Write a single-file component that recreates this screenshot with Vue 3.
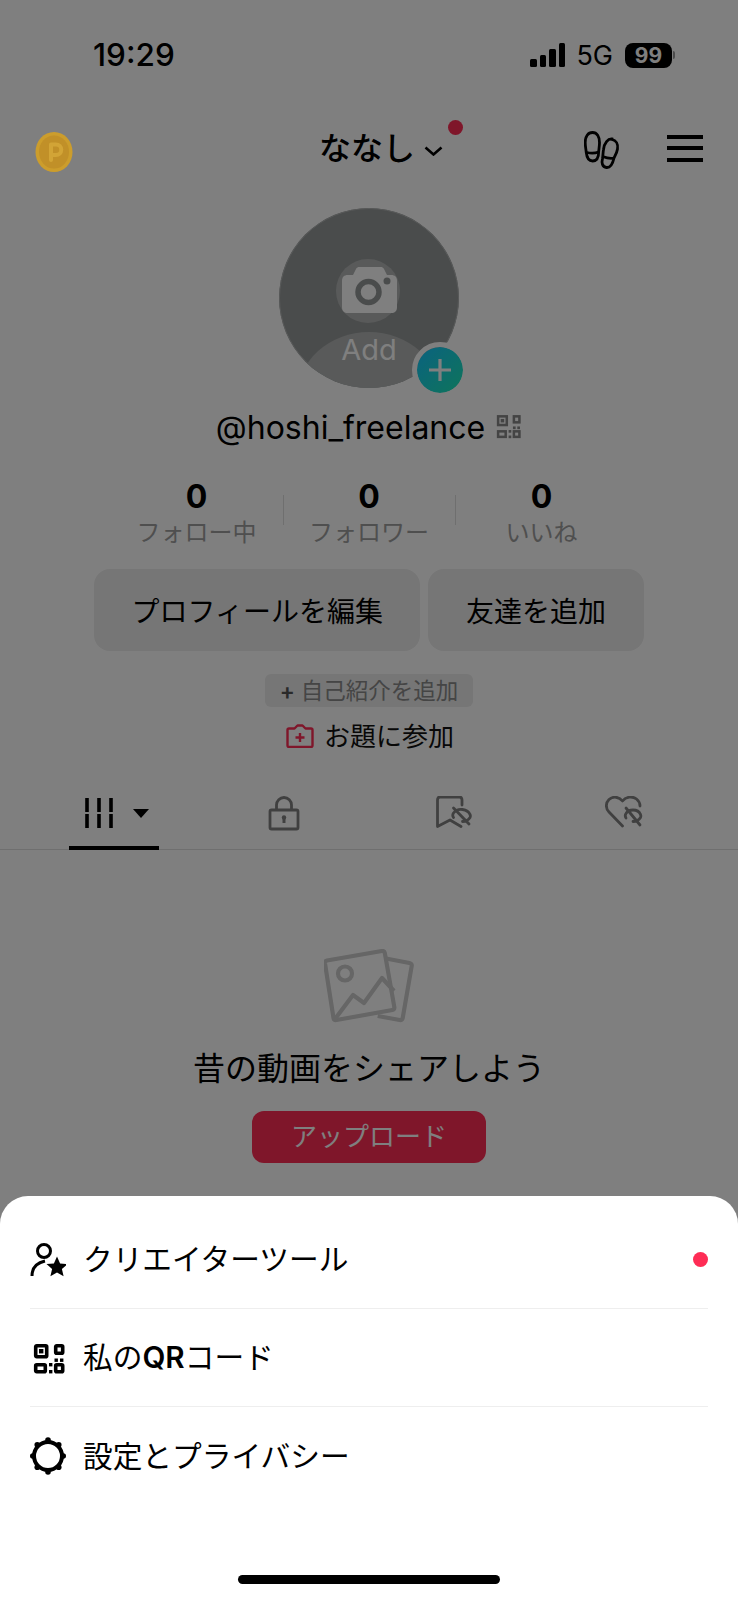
<template>
  <div class="page">
    <div class="status">
      <span class="time">19:29</span>
      <div class="status-right">
        <div class="signal"><i></i><i></i><i></i><i></i></div>
        <span class="net">5G</span>
        <div class="battery"><span>99</span></div>
        <div class="battery-cap"></div>
      </div>
    </div>

    <header class="top">
      <svg class="coin" width="38" height="40" viewBox="0 0 38 40">
        <ellipse cx="19" cy="20" rx="18.500" ry="20" fill="#cc9d2c" />
        <ellipse cx="19" cy="20" rx="15" ry="16.500" fill="#c19028" />
        <path d="M16 28V12.500h5a5 5 0 0 1 0 10.500H16" fill="none" stroke="#d2a436" stroke-width="4" stroke-linecap="round" stroke-linejoin="round" />
      </svg>
      <div class="title">
        <span>ななし</span>
        <svg width="19" height="10" viewBox="0 0 19 10">
          <path d="M1.500 1.500 9.500 8.500 17.500 1.500" fill="none" stroke="#000" stroke-width="2.600" />
        </svg>
        <i class="title-dot"></i>
      </div>
      <div class="top-icons">
        <svg class="feet" width="36" height="39" viewBox="0 0 36 39" fill="none" stroke="#000" stroke-width="2.800">
          <path d="M8.500 1.500c4.500 0 7 4 7 10 0 3-.500 6-.800 9 0 5-1.500 9.500-6 9.500s-6-4-6.500-9c-.300-3-1-6-1-9.500 0-6 2.800-10 7.300-10z" />
          <path d="M2.800 21.500c4 1 8 1 11.900-.500" />
          <path d="M28 8.500c4 .800 6.300 4.500 5.500 9.500-.500 3.500-2 6-3.500 9-1 4.500-2.500 10-7.500 9.500-4.500-.500-5-5-4-9 .500-3 .500-6 1-9 .800-6.500 4.500-11 8.500-10.500z" />
          <path d="M18.500 25.500c4 1.500 8 2.500 11.500 1.500" />
        </svg>
        <div class="burger"><i></i><i></i><i></i></div>
      </div>
    </header>

    <div class="avatar-wrap">
      <div class="avatar">
        <svg width="180" height="180" viewBox="0 0 180 180">
          <circle cx="89" cy="83" r="32" fill="#b2b5b5" />
          <ellipse cx="90" cy="189" rx="72" ry="65" fill="#b2b5b5" />
          <path d="M69 67h5l3-6c.800-1.500 2-2 3.500-2h21c1.500 0 2.700.500 3.500 2l3 6h4c4 0 6 2 6 6v26c0 4-2 6-6 6H69c-4 0-6-2-6-6V73c0-4 2-6 6-6z" fill="#fff" />
          <circle cx="89.500" cy="84" r="10.500" fill="none" stroke="#959898" stroke-width="5.500" />
          <circle cx="108" cy="73" r="3.500" fill="#959898" />
        </svg>
        <span class="add">Add</span>
      </div>
      <div class="badge">
        <svg width="24" height="24" viewBox="0 0 24 24">
          <path d="M12 1v22M1 12h22" stroke="#fff" stroke-width="3.200" />
        </svg>
      </div>
    </div>

    <div class="username">
      <span>@hoshi_freelance</span>
      <svg width="26" height="24" viewBox="4 3 31 30.400" fill="none" stroke="#888" stroke-width="3.200">
        <rect x="5.700" y="4.700" width="11" height="11" />
        <rect x="25.700" y="4.700" width="7" height="7.600" />
        <rect x="5.700" y="23.700" width="9.600" height="7" />
        <rect x="25.700" y="23.700" width="7" height="7" />
        <rect x="9" y="8" width="4.400" height="4.400" fill="#888" stroke="none" />
        <g fill="#888" stroke="none">
          <rect x="19" y="22" width="3.400" height="3.400" />
          <rect x="19" y="29" width="3.400" height="3.400" />
          <rect x="24.500" y="17.500" width="3.400" height="3.400" />
          <rect x="30" y="17.500" width="3.400" height="3.400" />
        </g>
      </svg>
    </div>

    <div class="stats">
      <div v-for="s in stats" :key="s.label" class="stat">
        <b>{{ s.value }}</b>
        <span>{{ s.label }}</span>
      </div>
    </div>

    <div class="actions">
      <button class="edit">プロフィールを編集</button>
      <button class="friend">友達を追加</button>
    </div>

    <div class="bio"><em>+</em>自己紹介を追加</div>

    <div class="topic">
      <svg width="28" height="24" viewBox="0 0 28 24" fill="none" stroke="#fe2c55" stroke-width="2.400" stroke-linejoin="round">
        <path d="M3 4.500h5.500l3-3h5l3 3h5.500c1 0 1.500.500 1.500 1.500v15.500c0 1-.500 1.500-1.500 1.500h-22c-1 0-1.500-.500-1.500-1.500V6c0-1 .500-1.500 1.500-1.500z" />
        <path d="M14 9v9M9.500 13.500h9" />
      </svg>
      <span>お題に参加</span>
    </div>

    <nav class="tabs">
      <div class="tab active">
        <svg width="66" height="32" viewBox="0 0 66 32">
          <path d="M2 1v14M2 17v14M14 1v14M14 17v14M26 1v14M26 17v14" stroke="#000" stroke-width="3.600" />
          <path d="M48 12h16l-8 9z" fill="#000" />
        </svg>
      </div>
      <div class="tab">
        <svg width="32" height="35" viewBox="0 0 32 35" fill="none" stroke="#808080" stroke-width="2.800">
          <rect x="2" y="14" width="28" height="19" rx="1.500" />
          <path d="M8.500 14V9a7.500 7.500 0 0 1 15 0v5" />
          <path d="M16 21v6" stroke-width="3" />
          <circle cx="16" cy="21.500" r="2.200" fill="#808080" stroke="none" />
        </svg>
      </div>
      <div class="tab">
        <svg width="36" height="32" viewBox="0 0 36 32" fill="none" stroke="#808080" stroke-width="2.800" stroke-linecap="round" stroke-linejoin="round">
          <path d="M26 9V4c0-2-1-3-2.500-3H4C2.500 1 1.500 2 1.500 4v26.500L14 24l11 6.500" />
          <path d="M17.500 21.500c-1-1.500-1-3 0-4.500 2-2.500 5.500-4 9-3.500 3.500.500 6.500 2.500 7.500 5 .500 1 .500 2 0 3-1.500 2.500-4.500 4-7.500 4" />
          <path d="M17.500 12 33 28" />
        </svg>
      </div>
      <div class="tab">
        <svg width="38" height="32" viewBox="0 0 38 32" fill="none" stroke="#808080" stroke-width="2.800" stroke-linecap="round" stroke-linejoin="round">
          <path d="M17.500 30 4 16C.500 12.500.500 7 4 3.500 8 0 14 .500 17.500 5c3.500-4.500 10-5 14-2 2.500 2 3.500 4.500 3.500 7" />
          <path d="M21 22c-1-1.500-1-3 0-4.500 1.500-2.500 4-3.500 7-3.500 3.500 0 6.500 2 7.500 4.500.500 1 .500 2 0 3-1.500 2.500-4.500 4-7.500 4" />
          <path d="M21 12l14 17" />
        </svg>
      </div>
    </nav>

    <div class="empty">
      <svg width="90" height="74" viewBox="0 0 90 74" fill="none" stroke="#ccc" stroke-width="4.200" stroke-linejoin="round">
        <path d="M62 9.500l23.500 4.500c1.500.300 2.500 1.500 2.200 3l-9 52c-.300 1.500-1.500 2.300-3 2l-22-4" />
        <path d="M3 11.500 58 2c1.500-.200 2.500.500 2.800 2l9.500 54c.200 1.500-.500 2.700-2 3L12.500 71c-1.500.200-2.700-.500-3-2L1 14.500c-.200-1.500.500-2.700 2-3z" />
        <circle cx="21" cy="24.500" r="7" />
        <path d="M11 70 29 46l11 8 18-25 12 13" />
      </svg>
      <p>昔の動画をシェアしよう</p>
      <button class="upload">アップロード</button>
    </div>

    <div class="overlay"></div>

    <div class="sheet">
      <div class="row">
        <svg class="row-icon" width="36" height="34" viewBox="0 0 36 34" fill="none" stroke="#000" stroke-width="3">
          <circle cx="14" cy="8" r="6.500" />
          <path d="M2 33c0-8 4-13 13-15" />
          <path d="M27 15l3.100 7 7.400.600-5.600 4.900 1.700 7.200L27 30.900l-6.600 3.800 1.700-7.200-5.600-4.900 7.400-.600z" fill="#000" stroke="none" transform="translate(0 -1.500)" />
        </svg>
        <span>クリエイターツール</span>
        <i class="row-dot"></i>
      </div>
      <div class="row">
        <svg class="row-icon" width="36" height="34" viewBox="0 0 36 34" fill="none" stroke="#000" stroke-width="3.600">
          <rect x="5.700" y="4.700" width="11" height="11" rx="1" />
          <rect x="25.700" y="4.700" width="7" height="7.600" rx="1" />
          <rect x="5.700" y="23.700" width="9.600" height="7" rx="1" />
          <rect x="25.700" y="23.700" width="7" height="7" rx="1" />
          <rect x="9" y="8" width="4.400" height="4.400" fill="#000" stroke="none" />
          <g fill="#000" stroke="none">
            <rect x="19" y="22" width="3.400" height="3.400" />
            <rect x="19" y="29" width="3.400" height="3.400" />
            <rect x="24.500" y="17.500" width="3.400" height="3.400" />
            <rect x="30" y="17.500" width="3.400" height="3.400" />
          </g>
        </svg>
        <span>私の<b>QR</b>コード</span>
      </div>
      <div class="row">
        <svg class="row-icon" width="36" height="38" viewBox="0 0 36 38">
          <circle cx="18" cy="19" r="14" fill="none" stroke="#000" stroke-width="4" />
          <circle v-for="d in gearDots" :key="d.x + ',' + d.y" :cx="d.x" :cy="d.y" r="2.800" fill="#000" />
        </svg>
        <span>設定とプライバシー</span>
      </div>
      <div class="home"></div>
    </div>
  </div>
</template>

<script setup>
const stats = [
  { value: 0, label: 'フォロー中' },
  { value: 0, label: 'フォロワー' },
  { value: 0, label: 'いいね' }
];

// little teeth round the settings ring
const gearDots = Array.from({ length: 8 }, (_, i) => {
  const a = (i * Math.PI) / 4 + Math.PI / 2;
  return { x: 18 + 15.2 * Math.cos(a), y: 19 + 16 * Math.sin(a) };
});
</script>

<style>
html, body {
  background: #fff;
}
</style>

<style scoped>
.page {
  position: relative;
  width: 738px;
  height: 1600px;
  overflow: hidden;
  background: #fff;
  color: #000;
  font-family: "Inter", "Noto Sans CJK JP", sans-serif;
}

.status {
  height: 120px;
  box-sizing: border-box;
  padding: 34px 63px 0 93px;
  display: flex;
  justify-content: space-between;
  align-items: flex-start;
}
.time {
  font-size: 31.500px;
  line-height: 42px;
  font-weight: 500;
}
.status-right {
  display: flex;
  align-items: center;
  height: 42px;
}
.signal {
  display: flex;
  align-items: flex-end;
  gap: 3px;
  height: 24px;
  margin-right: 11px;
}
.signal i {
  width: 6.500px;
  border-radius: 1.500px;
  background: #000;
}
.signal i:nth-child(1) { height: 8px; }
.signal i:nth-child(2) { height: 12px; }
.signal i:nth-child(3) { height: 18px; }
.signal i:nth-child(4) { height: 24px; }
.net {
  font-size: 27px;
  margin-right: 12px;
}
.battery {
  width: 47px;
  height: 25px;
  border-radius: 8px;
  background: #000;
  color: #fff;
  font-size: 21px;
  font-weight: 700;
  line-height: 25px;
  text-align: center;
}
.battery-cap {
  width: 2px;
  height: 8px;
  margin-left: 1px;
  border-radius: 0 2px 2px 0;
  background: #999;
}

.top {
  height: 56px;
  display: grid;
  grid-template-columns: 1fr auto 1fr;
  align-items: center;
  padding: 0 35px;
}
.coin {
  position: relative;
  z-index: 2;
  margin-top: 7px;
}
.title {
  position: relative;
  display: flex;
  align-items: center;
  gap: 9px;
  margin: 0 0 4px 24px;
  font-size: 32px;
  font-weight: 500;
}
.title svg {
  margin-top: 10px;
}
.title-dot {
  position: absolute;
  top: -3px;
  right: -20px;
  width: 15px;
  height: 15px;
  border-radius: 50%;
  background: #fe2c55;
}
.top-icons {
  display: flex;
  justify-content: flex-end;
  align-items: center;
  gap: 47px;
}
.feet {
  margin-top: 4px;
}
.burger {
  display: flex;
  flex-direction: column;
  gap: 7.500px;
}
.burger i {
  width: 36px;
  height: 4px;
  background: #000;
}

.avatar-wrap {
  position: relative;
  width: 180px;
  height: 180px;
  margin: 32px auto 0;
}
.avatar {
  position: relative;
  width: 180px;
  height: 180px;
  box-sizing: border-box;
  border-radius: 50%;
  overflow: hidden;
  background: #959898;
}
.avatar::after {
  content: "";
  position: absolute;
  inset: 0;
  border: 1.500px solid #b2b5b5;
  border-radius: 50%;
}
.avatar svg {
  display: block;
}
.add {
  position: absolute;
  left: 0;
  right: 0;
  top: 122px;
  text-align: center;
  color: #fff;
  font-size: 29px;
  line-height: 40px;
}
.badge {
  position: absolute;
  left: 133px;
  top: 134px;
  width: 46px;
  height: 46px;
  border: 5px solid #fff;
  border-radius: 50%;
  background: linear-gradient(135deg, #15c5ff, #1de9b6);
  display: flex;
  align-items: center;
  justify-content: center;
  background-clip: padding-box;
}

.username {
  display: flex;
  justify-content: center;
  align-items: center;
  gap: 11px;
  height: 40px;
  margin-top: 19px;
  font-size: 32px;
}

.stats {
  display: flex;
  justify-content: center;
  margin-top: 31px;
}
.stat {
  position: relative;
  width: 172.500px;
  display: flex;
  flex-direction: column;
  align-items: center;
}
.stat + .stat::before {
  content: "";
  position: absolute;
  left: 0;
  top: 17px;
  height: 30px;
  width: 1px;
  background: #dedede;
}
.stat b {
  font-size: 32px;
  line-height: 38px;
  font-weight: 700;
}
.stat span {
  font-size: 24px;
  line-height: 34px;
  color: #9e9e9e;
}

.actions {
  display: flex;
  justify-content: center;
  gap: 8px;
  margin-top: 19px;
}
.actions button {
  height: 82px;
  border: 0;
  border-radius: 16px;
  background: #ececec;
  color: #000;
  font-family: inherit;
  font-size: 28px;
}
.edit {
  width: 326px;
}
.friend {
  width: 215.500px;
}

.bio {
  width: 208px;
  height: 33px;
  margin: 23px auto 0;
  border-radius: 6px;
  background: #ececec;
  color: #8a8a8a;
  font-size: 22.500px;
  line-height: 33px;
  text-align: center;
}
.bio em {
  font-style: normal;
  font-weight: 600;
  color: #555;
  margin-right: 6px;
}

.topic {
  display: flex;
  justify-content: center;
  align-items: center;
  gap: 10px;
  height: 30px;
  margin-top: 12px;
  font-size: 26px;
  color: #111;
}
.topic svg {
  margin: 3px 0 0 2px;
}

.tabs {
  display: flex;
  height: 71px;
  margin-top: 30px;
  padding: 0 29px;
  border-bottom: 1px solid #dedede;
  box-sizing: border-box;
}
.tab {
  width: 170px;
  display: flex;
  justify-content: center;
  padding-top: 17px;
  box-sizing: border-box;
}
.tab.active {
  width: 90px;
  margin: 0 40px;
  height: 71px;
  border-bottom: 4px solid #000;
}
.tab.active svg {
  margin-top: 1px;
  margin-left: 8px;
}

.empty {
  display: flex;
  flex-direction: column;
  align-items: center;
  margin-top: 99px;
}
.empty p {
  margin: 24px 0 0;
  font-size: 32px;
  line-height: 44px;
}
.upload {
  width: 234px;
  height: 52px;
  margin-top: 20px;
  padding: 0 0 6px;
  border: 0;
  border-radius: 12px;
  background: #fe2c55;
  color: #fff;
  font-family: inherit;
  font-size: 26px;
}

.overlay {
  position: absolute;
  inset: 0;
  z-index: 1;
  background: rgba(0, 0, 0, 0.5);
}

.sheet {
  position: absolute;
  left: 0;
  right: 0;
  bottom: 0;
  z-index: 3;
  height: 404px;
  box-sizing: border-box;
  padding: 15px 30px 0;
  border-radius: 28px 28px 0 0;
  background: #fff;
}
.row {
  position: relative;
  display: flex;
  align-items: center;
  gap: 17px;
  height: 98px;
  box-sizing: border-box;
  font-size: 29.700px;
}
.row span {
  margin-top: -4px;
}
.row:nth-child(-n+2) {
  border-bottom: 1.500px solid #eee;
}
.row b {
  font-weight: 600;
}
.row-icon {
  flex: none;
}
.row-dot {
  position: absolute;
  right: 0;
  top: 41px;
  width: 15px;
  height: 15px;
  border-radius: 50%;
  background: #fe2c55;
}
.home {
  position: absolute;
  left: 238px;
  bottom: 16px;
  width: 262px;
  height: 9px;
  border-radius: 5px;
  background: #000;
}
</style>
